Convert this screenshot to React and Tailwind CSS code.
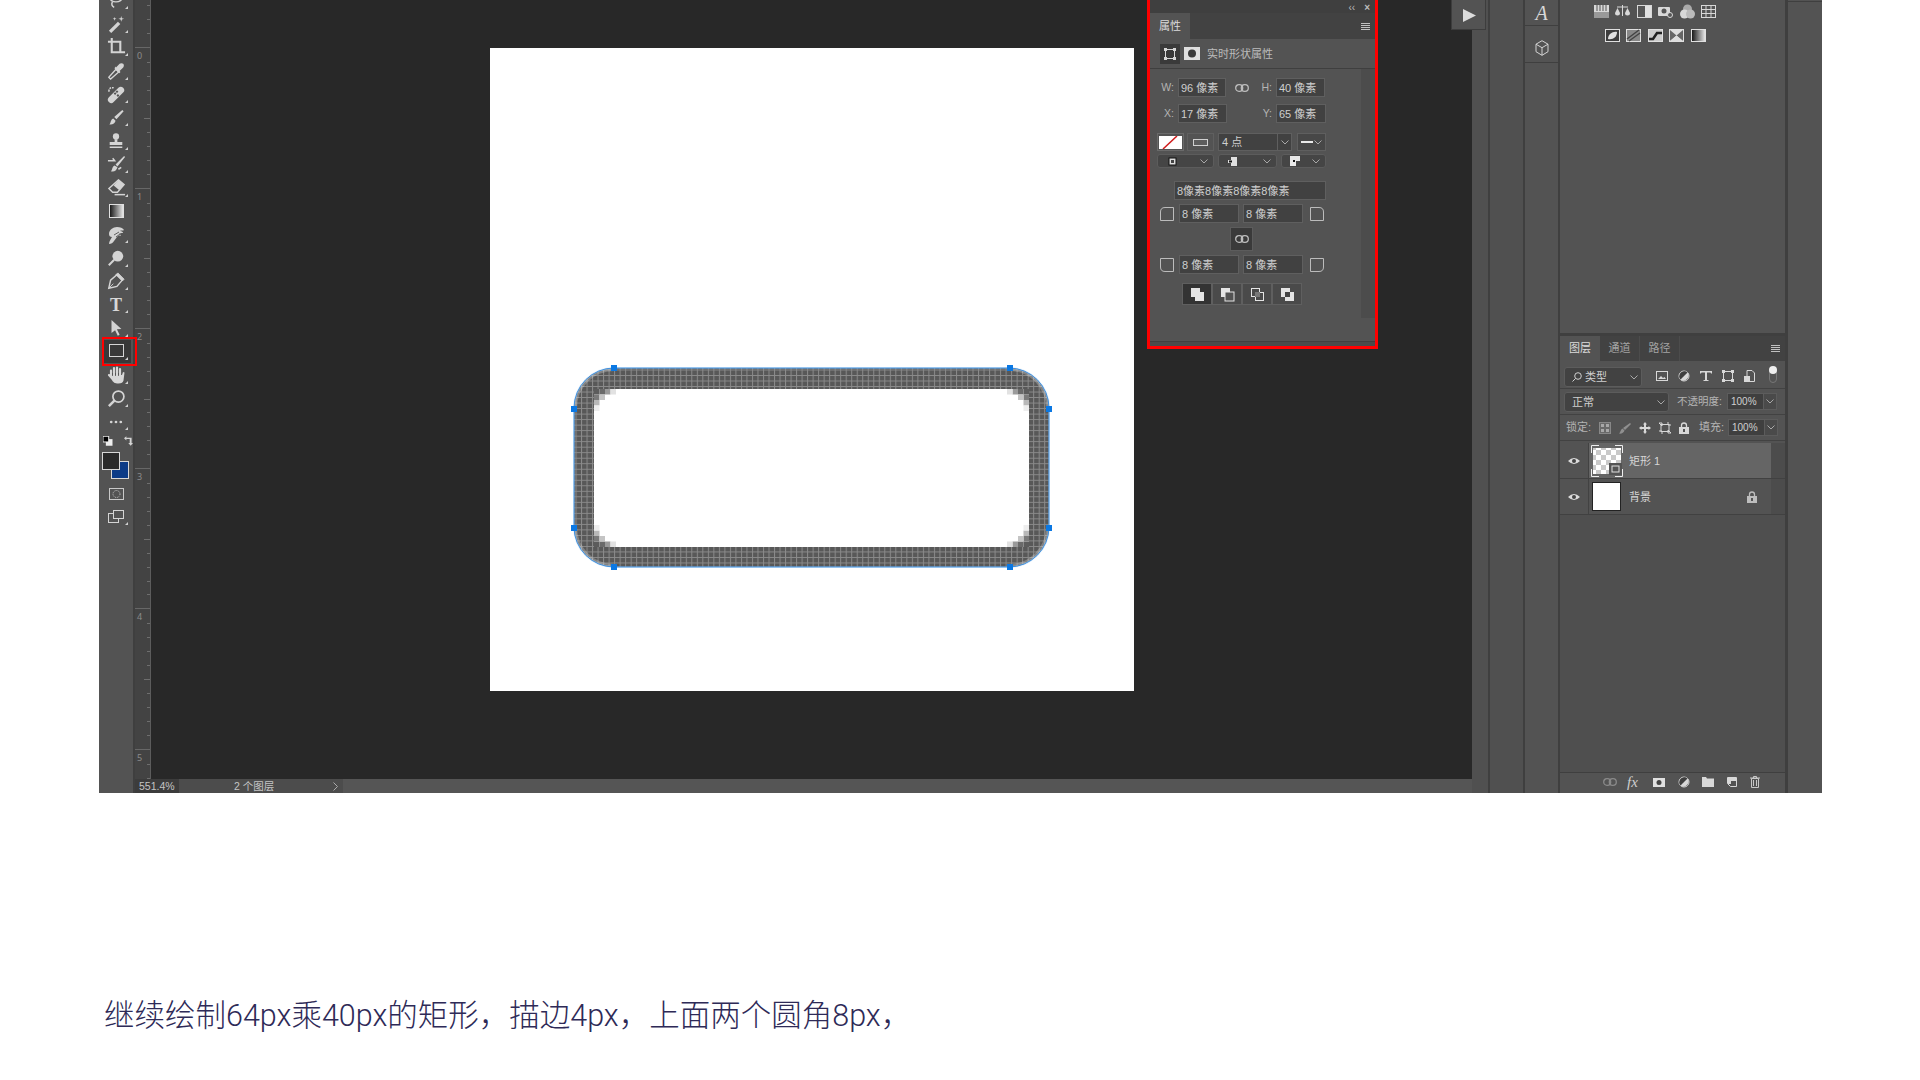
const cjk = { fontFamily: '"Liberation Sans", "Noto Sans CJK SC", sans-serif' };

function Ico({ s = 18, children, fill = "#d4d4d4" }) {
  return (
    <svg width={s} height={s} viewBox="0 0 20 20" fill={fill} className="block shrink-0">
      {children}
    </svg>
  );
}

const line = { fill: "none", stroke: "#d4d4d4", strokeWidth: 1.6 };

const toolIcons = [
  <Ico><ellipse cx="10" cy="6" rx="7" ry="5" {...line} /><path d="M6 11q-2 4 2 6" {...line} /></Ico>,
  <Ico s={19}><path d="M2 16.500l9.500-9.500 2.500 2.500L4.500 19z" /><path d="M15 1l.7 2.300L18 4l-2.300.7L15 7l-.7-2.300L12 4l2.300-.7zM8 2l.5 1.500L10 4l-1.500.5L8 6l-.5-1.500L6 4l1.500-.5z" /></Ico>,
  <Ico s={19}><path d="M1 4h13v12M5 0v15h14" fill="none" stroke="#d4d4d4" strokeWidth="2.200" /></Ico>,
  <Ico><path d="M3 18l-1-1 8-9 3 3-9 8z" fill="none" stroke="#d4d4d4" strokeWidth="1.500" /><path d="M10 6l4-4c1-1 3-1 4 0s1 3 0 4l-4 4 1 1-1.500 1.500-5-5L9 5z" /></Ico>,
  <Ico s={19}><path d="M2 13L12 3a3 3 0 0 1 5 5L7 18a3 3 0 0 1-5-5z" /><path d="M7 9l1.500-1.500L10 9l-1.500 1.500zM10 11l1.500-1.500L13 11l-1.500 1.500zM9 7l1.500-1.500L12 7l-1.500 1.500z" fill="#555" /><path d="M2 7q0-5 5-4" {...line} strokeDasharray="2 1" /></Ico>,
  <Ico><path d="M17 1l1.500 1.500-8 9-2.500-2.500zM7 10.500l2.500 2.500c-.5 3-4 5-7 4 2-1 1-5 4.500-6.500z" /></Ico>,
  <Ico><circle cx="10" cy="5" r="3.500" /><path d="M8.500 8h3v3h5.500v3.500H3V11h5.500zM3 16h14v1.800H3z" /></Ico>,
  <Ico s={19}><path d="M18 1l1 1-8 10-2-2zM8 11l3 2c-1 4-4 5-7 4 2-1 1-5 4-6z" /><path d="M1 6h7l-2-2.500M12 15l3-2" {...line} /></Ico>,
  <Ico s={19}><path d="M12 2l6 5-7 8H6L2 11z" fill="none" stroke="#d4d4d4" strokeWidth="1.500" /><path d="M12 2l6 5-5 6-6-5z" /><path d="M8 17.500h11" {...line} /></Ico>,
  <svg width="15" height="14" viewBox="0 0 15 14" className="block">
    <defs><linearGradient id="toolGrad"><stop offset="0" stopColor="#111" /><stop offset="1" stopColor="#eee" /></linearGradient></defs>
    <rect x="0.500" y="0.500" width="14" height="13" fill="url(#toolGrad)" stroke="#e0e0e0" />
  </svg>,
  <Ico s={20}><path d="M3 19c0-3 2-5 3-7-2 0-3-1-3-3 0-4 4-7 8-7 3 0 6 1 7 3-1 1-3 0-4 1 2 0 3 1 3 2-2 0-3 0-4 1 1 0 2 1 2 2-2-1-3 0-4 1l-3 4c-1 2-3 3-5 3z" /><path d="M8 10l5-3M10 12l4-3" stroke="#535353" strokeWidth="0.900" fill="none" /></Ico>,
  <Ico><circle cx="12" cy="8" r="6" /><path d="M8 12l-6 6" {...line} strokeWidth="2.200" /></Ico>,
  <Ico><path d="M2 18l2-9 7-6 6 6-6 7z" fill="none" stroke="#d4d4d4" strokeWidth="1.600" /><path d="M12 1l7 7-2 2-7-7zM2 18l5-5" fill="#d4d4d4" stroke="#d4d4d4" /></Ico>,
  <span className="text-[18px] leading-none font-bold text-[#d8d8d8]" style={{ fontFamily: '"Liberation Serif", serif' }}>T</span>,
  <Ico><path d="M5 1l11 10-5 .5 3 6-2 1-3-6-4 3z" /></Ico>,
  <svg width="15" height="13" viewBox="0 0 15 13" className="block -mt-[2px]"><rect x="0.500" y="0.500" width="14" height="12" fill="none" stroke="#d4d4d4" /></svg>,
  <Ico s={20}>
    <path d="M5 10.500V5.500M8 10V3M11 10V2.500M14 10.500V4" stroke="#d8d8d8" strokeWidth="2.200" strokeLinecap="round" fill="none" />
    <path d="M4 10h12l1-3 1.500.5-1 8c-.5 2-2 3-5 3-4 0-5-1-7-4L2 10.500c-.5-1 1-2 2-1z" fill="#d8d8d8" />
    <path d="M6.500 8v3M9.500 8v3M12.500 8v3" stroke="#535353" strokeWidth="0.800" />
  </Ico>,
  <Ico s={19}><circle cx="12" cy="8" r="5.800" {...line} strokeWidth="1.800" /><path d="M8 12l-6 6" {...line} strokeWidth="2.600" /></Ico>,
  <Ico s={16}><circle cx="4" cy="10" r="1.700" /><circle cx="10" cy="10" r="1.700" /><circle cx="16" cy="10" r="1.700" /></Ico>,
];

function Tool({ children, corner = true, active }) {
  return (
    <div className="relative h-[23.4px] flex items-center justify-center">
      {active && <div className="absolute left-[3px] top-0 w-[35px] h-[29px] -mt-[3px] border-2 border-[#f00] z-10" />}
      {active && <div className="absolute left-[5px] top-0 w-[27px] h-[23px] bg-[#383838]" />}
      <div className="relative">{children}</div>
      {corner && <span className="absolute right-[5px] bottom-[3px] w-0 h-0 border-l-[3px] border-l-transparent border-b-[3px] border-b-[#d0d0d0]" />}
    </div>
  );
}

function Toolbar() {
  return (
    <div className="w-[36px] shrink-0 bg-[#535353] border-r-2 border-[#3f3f3f] flex flex-col">
      <div className="-mt-[11px] flex flex-col">
        {toolIcons.map((icon, i) => (
          <Tool key={i} active={i === 15} corner={i !== 9}>{icon}</Tool>
        ))}
      </div>
      <div className="relative h-[12px] mt-[3px] flex gap-[11px] pl-[4px]">
        <svg width="10" height="10" viewBox="0 0 10 10"><rect x="3" y="3" width="7" height="7" fill="#eee" /><rect width="6" height="6" fill="#000" stroke="#eee" /></svg>
        <svg width="10" height="10" viewBox="0 0 10 10"><path d="M0 2l2.500-2v1.500H8V7h1.500L7 10 4.500 7H6V3H2.500v1.500z" fill="#d4d4d4" /></svg>
      </div>
      <div className="relative h-[28px] w-[27px] ml-[3px] mt-[4px]">
        <div className="absolute left-[9px] top-[9px] w-[18px] h-[18px] bg-[#0c3b87] border border-[#d8d8d8]" />
        <div className="absolute left-0 top-0 w-[18px] h-[18px] bg-[#2a2a2a] border border-[#d8d8d8]" />
      </div>
      <div className="h-[23px] mt-[2px] flex items-center justify-center">
        <svg width="15" height="12" viewBox="0 0 15 12"><rect x="0.500" y="0.500" width="14" height="11" fill="none" stroke="#c8c8c8" /><circle cx="7.500" cy="6" r="3.500" fill="none" stroke="#c8c8c8" strokeDasharray="1 1" /></svg>
      </div>
      <div className="relative h-[23px] flex items-center justify-center">
        <svg width="16" height="13" viewBox="0 0 16 13"><rect x="0.500" y="3.500" width="10" height="9" fill="#535353" stroke="#d4d4d4" /><rect x="5.500" y="0.500" width="10" height="8" fill="#535353" stroke="#d4d4d4" /></svg>
        <span className="absolute right-[5px] bottom-[3px] w-0 h-0 border-l-[3px] border-l-transparent border-b-[3px] border-b-[#d0d0d0]" />
      </div>
    </div>
  );
}

function Ruler() {
  const blocks = ["", "0", "1", "2", "3", "4", "5"];
  return (
    <div className="w-[16px] shrink-0 bg-[#434343] border-r border-[#5c5c5c] overflow-hidden">
      <div className="-mt-[93px]">
        {blocks.map((n) => (
          <div key={n} className="flex h-[140.3px] border-t border-[#676767]">
            <span className="pl-[2px] pt-[3px] text-[9px] leading-[10px] text-[#8c8c8c]">{n}</span>
            <div className="ml-auto flex flex-col items-end">
              {[0, 1, 2, 3, 4, 5, 6, 7, 8, 9].map((i) => (
                <div key={i} className="h-[14.03px]">
                  {i > 0 && <div className={`border-t border-[#6e6e6e] ${i === 5 ? "w-[6px]" : "w-[3px]"}`} />}
                </div>
              ))}
            </div>
          </div>
        ))}
      </div>
    </div>
  );
}

function Shape() {
  const handles = [[44, 4], [440, 4], [4, 45], [4, 164], [479, 45], [479, 164], [44, 203], [440, 203]];
  const corners = ["translate(24 25)", "translate(459 25) scale(-1 1)", "translate(24 183) scale(1 -1)", "translate(459 183) scale(-1 -1)"];
  const pixels = [[0, 0, "#5c5c5c"], [5.5, 0, "#6a6a6a"], [11, 0, "#9a9a9a"], [16.5, 0, "#e2e2e2"], [0, 5.5, "#7a7a7a"], [5.5, 5.5, "#c4c4c4"], [0, 11, "#b8b8b8"], [0, 16.5, "#ededed"]];
  const outer = ["M5.500 44a38.500 38.500 0 0 1 38.500-38.500", "M477.500 44a38.500 38.500 0 0 0-38.500-38.500", "M5.500 163a38.500 38.500 0 0 0 38.500 38.500", "M477.500 163a38.500 38.500 0 0 1-38.500 38.500"];
  return (
    <svg width="490" height="210" viewBox="0 0 490 210" className="block">
      <defs>
        <pattern id="pixelGrid" width="5.514" height="5.514" patternUnits="userSpaceOnUse">
          <rect width="5.514" height="5.514" fill="#585858" />
          <path d="M0 .5h5.514M.5 0v5.514" stroke="#8b8b8b" strokeWidth="1" />
        </pattern>
      </defs>
      <path fillRule="evenodd" fill="url(#pixelGrid)" d="M44 4H439a40 40 0 0 1 40 40V163a40 40 0 0 1-40 40H44a40 40 0 0 1-40-40V44a40 40 0 0 1 40-40zM24 25V183H459V25z" />
      {corners.map((t) => (
        <g key={t} transform={t}>
          {pixels.map(([x, y, c]) => <rect key={`${x}-${y}`} x={x} y={y} width="5.500" height="5.500" fill={c} />)}
        </g>
      ))}
      {outer.map((d) => <path key={d} d={d} fill="none" stroke="#fff" strokeOpacity="0.250" strokeWidth="3" />)}
      <rect x="4" y="4" width="475" height="199" rx="40" fill="none" stroke="#bcdcf8" strokeWidth="2" opacity="0.400" />
      <rect x="4" y="4" width="475" height="199" rx="40" fill="none" stroke="#2a86e0" strokeWidth="1" opacity="0.850" />
      {handles.map(([x, y]) => <rect key={`${x}-${y}`} x={x - 3} y={y - 3} width="6" height="6" fill="#0b78e3" />)}
    </svg>
  );
}

function Chevron({ c = "#a8a8a8" }) {
  return (
    <svg width="8" height="5" viewBox="0 0 8 5" className="block shrink-0"><path d="M.5 .5L4 4 7.500 .5" fill="none" stroke={c} /></svg>
  );
}

function Menu() {
  return (
    <div className="flex flex-col gap-[1px] w-[9px]">
      <div className="h-[1px] bg-[#c0c0c0]" /><div className="h-[1px] bg-[#c0c0c0]" /><div className="h-[1px] bg-[#c0c0c0]" /><div className="h-[1px] bg-[#c0c0c0]" />
    </div>
  );
}

function Link({ c = "#bdbdbd" }) {
  return (
    <svg width="14" height="8" viewBox="0 0 14 8" className="block"><rect x="0.700" y="0.700" width="7" height="6.600" rx="3.300" fill="none" stroke={c} strokeWidth="1.300" /><rect x="6.300" y="0.700" width="7" height="6.600" rx="3.300" fill="none" stroke={c} strokeWidth="1.300" /></svg>
  );
}

function HalfCircle() {
  return (
    <svg width="12" height="12" viewBox="0 0 12 12" className="block">
      <circle cx="6" cy="6" r="5" fill="#3f3f3f" stroke="#d8d8d8" />
      <path d="M2.500 9.500A5 5 0 0 1 9.500 2.500z" fill="#3f3f3f" />
      <path d="M2.500 9.500A5 5 0 0 0 9.500 2.500z" fill="#d8d8d8" />
    </svg>
  );
}

function Field({ className = "", children }) {
  return (
    <div className={`h-[19px] bg-[#414141] border border-[#5f5f5f] pl-[2px] pt-[1px] flex items-center text-[11px] text-[#cfcfcf] whitespace-nowrap overflow-hidden ${className}`}>
      {children}
    </div>
  );
}

function Label({ className = "", children }) {
  return <span className={`text-[10.500px] text-[#b4b4b4] text-right ${className}`}>{children}</span>;
}

function CornerIcon({ r }) {
  const d = {
    tl: "M.5 13.500V5Q.5 .5 5 .5h8.500v13z",
    tr: "M.5 13.500V.5H9Q13.500 .5 13.500 5v8.500z",
    bl: "M.5 .5h13v13H5Q.5 13.500 .5 9z",
    br: "M.5 .5h13V9q0 4.500-4.500 4.500H.5z",
  }[r];
  return <svg width="14" height="14" viewBox="0 0 14 14" className="block shrink-0"><path d={d} fill="none" stroke="#bcbcbc" /></svg>;
}

function CornerRow({ left, right }) {
  return (
    <div className="flex items-center pl-[10px]">
      <CornerIcon r={left} />
      <Field className="w-[60px] ml-[5px]">8 像素</Field>
      <Field className="w-[60px] ml-[4px]">8 像素</Field>
      <div className="ml-[7px]"><CornerIcon r={right} /></div>
    </div>
  );
}

function Dropdown({ className = "", children }) {
  return (
    <div className={`h-[14px] bg-[#454545] border border-[#5c5c5c] rounded-[3px] flex items-center justify-between pr-[5px] ${className}`}>
      {children}
      <Chevron />
    </div>
  );
}

function PropertiesPanel() {
  const combine = [
    <><rect x="1" y="1" width="9" height="9" fill="#e4e4e4" /><rect x="5" y="5" width="9" height="9" fill="#e4e4e4" /></>,
    <><rect x="1" y="1" width="9" height="9" fill="#e4e4e4" /><rect x="5" y="5" width="9" height="9" fill="#535353" stroke="#e4e4e4" /></>,
    <><rect x="1.500" y="1.500" width="8" height="8" fill="none" stroke="#e4e4e4" /><rect x="5.500" y="5.500" width="8" height="8" fill="none" stroke="#e4e4e4" /><rect x="5" y="5" width="5" height="5" fill="#777" /></>,
    <><rect x="1" y="1" width="9" height="9" fill="#e4e4e4" /><rect x="5" y="5" width="9" height="9" fill="#e4e4e4" /><rect x="5" y="5" width="5" height="5" fill="#444" /></>,
  ];
  return (
    <div className="absolute left-[996px] top-0 w-[231px] h-[349px] border-[3px] border-[#f00] bg-[#535353] flex flex-col" style={cjk}>
      <div className="h-[10px] -mt-[3px] pt-[3px] box-content bg-[#3f3f3f] flex items-center justify-end gap-[9px] pr-[5px] text-[10px] leading-none text-[#bdbdbd]">
        <span>‹‹</span><span className="font-bold">×</span>
      </div>
      <div className="h-[26px] bg-[#424242] flex items-center justify-between pr-[5px]">
        <div className="w-[40px] h-full bg-[#535353] flex items-center justify-center text-[11px] text-[#dcdcdc]">属性</div>
        <Menu />
      </div>
      <div className="h-[30px] border-b border-[#3f3f3f] flex items-center pl-[10px]">
        <div className="w-[20px] h-[20px] bg-[#3a3a3a] flex items-center justify-center">
          <svg width="12" height="12" viewBox="0 0 12 12"><rect x="1.500" y="1.500" width="9" height="9" fill="none" stroke="#d8d8d8" /><path d="M0 0h3v3H0zM9 0h3v3H9zM0 9h3v3H0zM9 9h3v3H9z" fill="#d8d8d8" /></svg>
        </div>
        <svg width="16" height="13" viewBox="0 0 16 13" className="ml-[4px]"><rect width="16" height="13" fill="#e0e0e0" /><circle cx="8" cy="6.500" r="4" fill="#3a3a3a" /></svg>
        <span className="ml-[7px] pt-[2px] text-[11px] text-[#bcbcbc]">实时形状属性</span>
      </div>
      <div className="flex">
        <div className="w-[211px] pt-[9px] flex flex-col">
          <div className="flex items-center pl-[7px]">
            <Label className="w-[17px] pt-[1px]">W:</Label>
            <Field className="w-[48px] ml-[4px]">96 像素</Field>
            <div className="w-[31px] flex justify-center"><Link /></div>
            <Label className="w-[15px] pt-[1px]">H:</Label>
            <Field className="w-[49px] ml-[4px]">40 像素</Field>
          </div>
          <div className="flex items-center pl-[7px] mt-[7px]">
            <Label className="w-[17px] pt-[1px]">X:</Label>
            <Field className="w-[49px] ml-[4px]">17 像素</Field>
            <div className="w-[30px]" />
            <Label className="w-[15px] pt-[1px]">Y:</Label>
            <Field className="w-[50px] ml-[4px]">65 像素</Field>
          </div>
          <div className="flex items-center pl-[7px] mt-[10px]">
            <div className="w-[27px] h-[18px] border border-[#6a6a6a] flex items-center justify-center">
              <svg width="23" height="13" viewBox="0 0 23 13"><rect width="23" height="13" fill="#fff" /><path d="M4 13L18 0" stroke="#d01c1c" strokeWidth="1.500" /></svg>
            </div>
            <div className="w-[27px] h-[18px] ml-[3px] border border-[#5f5f5f] flex items-center justify-center">
              <div className="w-[15px] h-[7px] border border-[#d0d0d0] bg-[#5d5d5d]" />
            </div>
            <div className="w-[74px] h-[18px] ml-[4px] bg-[#414141] border border-[#5f5f5f] flex items-center text-[11px] text-[#cfcfcf]">
              <span className="pl-[3px] pt-[1px] w-[59px]">4 点</span>
              <div className="h-full w-[14px] border-l border-[#5f5f5f] flex items-center justify-center"><Chevron /></div>
            </div>
            <div className="w-[29px] h-[18px] ml-[5px] bg-[#474747] border border-[#5f5f5f] flex items-center justify-between px-[3px]">
              <div className="w-[12px] h-[2px] bg-[#e8e8e8]" />
              <Chevron />
            </div>
          </div>
          <div className="flex items-center pl-[7px] mt-[3px]">
            <Dropdown className="w-[57px] pl-[9px]">
              <svg width="11" height="11" viewBox="0 0 11 11"><rect x="2" y="2" width="7" height="7" fill="#ddd" stroke="#111" /><rect x="4" y="4" width="3" height="3" fill="#444" /></svg>
            </Dropdown>
            <Dropdown className="w-[59px] ml-[4px] pl-[9px]">
              <svg width="9" height="9" viewBox="0 0 9 9"><path d="M3 0h6v9H3V6H0V3h3z" fill="#e0e0e0" /><rect x="1" y="3.500" width="3" height="2" fill="#111" /></svg>
            </Dropdown>
            <Dropdown className="w-[45px] ml-[4px] pl-[8px]">
              <svg width="10" height="10" viewBox="0 0 10 10"><path d="M0 0h10v5H6v5H0z" fill="#e8e8e8" /><rect x="3" y="4" width="2" height="2" fill="#111" /></svg>
            </Dropdown>
          </div>
          <div className="pl-[24px] mt-[13px]">
            <Field className="w-[152px]">8像素8像素8像素8像素</Field>
          </div>
          <div className="mt-[4px]"><CornerRow left="tl" right="tr" /></div>
          <div className="mt-[4px] h-[24px] pl-[80px]">
            <div className="w-[23px] h-[24px] bg-[#3a3a3a] border border-[#5c5c5c] flex items-center justify-center"><Link /></div>
          </div>
          <div className="mt-[4px]"><CornerRow left="bl" right="br" /></div>
          <div className="mt-[9px] pl-[32px] flex">
            {combine.map((c, i) => (
              <div key={i} className={`w-[30px] h-[22px] border border-[#5f5f5f] flex items-center justify-center ${i === 0 ? "bg-[#333]" : "bg-[#4a4a4a]"}`}>
                <svg width="15" height="15" viewBox="0 0 15 15">{c}</svg>
              </div>
            ))}
          </div>
        </div>
        <div className="w-[14px] h-[249px] bg-[#4c4c4c]" />
      </div>
      <div className="mt-auto h-[5px] border-t border-[#3f3f3f] bg-[#4a4a4a]" />
    </div>
  );
}

function Canvas() {
  return (
    <div className="relative flex-1 bg-[#282828] pl-[339px] pt-[48px]">
      <div className="w-[644px] h-[643px] bg-white pl-[80px] pt-[316px]">
        <Shape />
      </div>
      <PropertiesPanel />
      <div className="absolute right-[-14px] top-0 w-[35px] h-[30px] bg-[#535353] border border-t-0 border-[#3d3d3d] flex items-center justify-center pl-[2px] pt-[2px]">
        <svg width="13" height="13" viewBox="0 0 13 13"><path d="M0 0l13 6.500L0 13z" fill="#dcdcdc" /></svg>
      </div>
    </div>
  );
}

function StatusBar() {
  return (
    <div className="h-[14px] shrink-0 flex bg-[#4f4f4f] text-[10.500px] leading-[14px] text-[#c4c4c4]" style={cjk}>
      <div className="w-[44px] bg-[#3c3c3c] pl-[4px]">551.4%</div>
      <div className="w-[164px] bg-[#4c4c4c] flex items-center pr-[3px]">
        <span className="ml-[55px]">2 个图层</span>
        <svg width="5" height="9" viewBox="0 0 5 9" className="ml-auto mr-[2px]"><path d="M.5 .5L4.500 4.500 .5 8.500" fill="none" stroke="#aaa" /></svg>
      </div>
      <div className="flex-1 bg-[#555]" />
    </div>
  );
}

const adjustRow1 = [
  <><rect width="15" height="13" y="1" fill="#d8d8d8" /><path d="M3 1v6M6 1v6M9 1v6M12 1v6" stroke="#555" /><rect y="8" width="15" height="6" fill="#999" /></>,
  <><path d="M7.500 1v11M2 3h11" stroke="#d8d8d8" /><path d="M0 9l2.500-5L5 9a2.500 2.500 0 0 1-5 0zM10 9l2.500-5L15 9a2.500 2.500 0 0 1-5 0z" fill="#d8d8d8" /></>,
  <><rect x="0.500" y="1.500" width="14" height="12" fill="none" stroke="#d8d8d8" /><rect x="1" y="2" width="7" height="11" fill="#555" /><rect x="8" y="2" width="6" height="11" fill="#e0e0e0" /></>,
  <><rect y="3" width="12" height="9" rx="1" fill="#d8d8d8" /><circle cx="6" cy="7" r="2.500" fill="#555" /><circle cx="12" cy="11" r="2.500" fill="#555" stroke="#d8d8d8" /></>,
  <><circle cx="7.500" cy="5" r="4.500" fill="#aaa" /><circle cx="4.500" cy="10" r="4.500" fill="#d8d8d8" /><circle cx="10.500" cy="10" r="4.500" fill="#bbb" /></>,
  <><rect x="0.500" y="1.500" width="14" height="12" fill="none" stroke="#d8d8d8" /><path d="M5 2v11M10 2v11M1 5.500h13M1 9.500h13" stroke="#d8d8d8" /></>,
];

const adjustRow2 = [
  <><rect width="15" height="13" y="1" fill="#e0e0e0" /><rect x="1" y="2" width="13" height="11" fill="#3d3d3d" /><path d="M3 11c0-5 5-8 9-7 0 5-4 8-9 7z" fill="#e0e0e0" /></>,
  <><rect width="15" height="13" y="1" fill="#e0e0e0" /><rect x="1" y="2" width="13" height="11" fill="#888" /><path d="M1 11l12-9M3 13l11-8" stroke="#444" strokeWidth="1.500" /></>,
  <><rect width="15" height="13" y="1" fill="#e0e0e0" /><rect x="1" y="2" width="13" height="11" fill="#ccc" /><path d="M1 11h4l4-6h5" stroke="#222" strokeWidth="2.500" fill="none" /></>,
  <><rect width="15" height="13" y="1" fill="#e0e0e0" /><path d="M1 2h13L7.500 7.500z" fill="#ddd" /><path d="M1 2l6.500 5.500L1 13zM14 2L7.500 7.500 14 13z" fill="#666" /><path d="M1 13l6.500-5.500L14 13z" fill="#ddd" /></>,
  <><defs><linearGradient id="adjGrad"><stop offset="0" stopColor="#111" /><stop offset="1" stopColor="#eee" /></linearGradient></defs><rect x="0.500" y="1.500" width="14" height="12" fill="url(#adjGrad)" stroke="#e0e0e0" /></>,
];

function AdjustIcons() {
  return (
    <div className="h-[333px] flex flex-col items-center pt-[4px] pr-[35px]">
      <div className="flex gap-[6.500px]">
        {adjustRow1.map((c, i) => <svg key={i} width="15" height="15" viewBox="0 0 15 15">{c}</svg>)}
      </div>
      <div className="flex gap-[6.500px] mt-[9px]">
        {adjustRow2.map((c, i) => <svg key={i} width="15" height="15" viewBox="0 0 15 15">{c}</svg>)}
      </div>
    </div>
  );
}

function Eye() {
  return (
    <svg width="12" height="8" viewBox="0 0 12 8" className="block"><path d="M0 4Q6-2 12 4 6 10 0 4z" fill="#dcdcdc" /><circle cx="6" cy="4" r="2" fill="#444" /></svg>
  );
}

function Lock({ c = "#d8d8d8" }) {
  return (
    <svg width="10" height="12" viewBox="0 0 10 12" className="block"><path d="M2.500 5V3.500a2.500 2.500 0 0 1 5 0V5" fill="none" stroke={c} strokeWidth="1.300" /><rect y="5" width="10" height="7" fill={c} /><rect x="4" y="7" width="2" height="3" fill="#535353" /></svg>
  );
}

function LayerRow({ selected, thumb, name, locked }) {
  return (
    <div className="flex h-[36px] border-b border-[#414141]">
      <div className="w-[28px] flex items-center justify-center"><Eye /></div>
      <div className={`w-[183px] border-l border-[#424242] flex items-center pl-[2px] ${selected ? "bg-[#656565]" : "bg-[#535353]"}`}>
        {thumb}
        <span className="ml-[6px] pt-[2px] text-[11px] text-[#d6d6d6]">{name}</span>
        {locked && <div className="ml-auto mr-[14px]"><Lock c="#bdbdbd" /></div>}
      </div>
      <div className="flex-1 bg-[#4c4c4c]" />
    </div>
  );
}

function ShapeThumb() {
  return (
    <svg width="32" height="32" viewBox="0 0 32 32" className="block shrink-0">
      <defs>
        <pattern id="checker" width="10" height="10" patternUnits="userSpaceOnUse">
          <rect width="10" height="10" fill="#fff" /><rect width="5" height="5" fill="#c9c9c9" /><rect x="5" y="5" width="5" height="5" fill="#c9c9c9" />
        </pattern>
      </defs>
      <rect x="2" y="3" width="28" height="26" fill="url(#checker)" />
      <path d="M.5 8V.5H8M24 .5h7.500V8M.5 24v7.500H8M24 31.500h7.500V24" fill="none" stroke="#eee" />
      <rect x="18" y="18" width="13" height="12" fill="#535353" />
      <rect x="21" y="21" width="7" height="6" fill="none" stroke="#e0e0e0" />
    </svg>
  );
}

function LayersPanel() {
  const filters = [
    <><rect x="0.500" y="1.500" width="11" height="9" fill="none" stroke="#d8d8d8" /><path d="M2 9l3-3 2 2 1.500-1L10 9z" fill="#d8d8d8" /></>,
    null,
    <><path d="M0 1h12v2.500h-1L10.500 2.500H7v7.500h1.500v1h-5v-1H5V2.500H1.500L1 3.500H0z" fill="#d8d8d8" /></>,
    <><rect x="1.500" y="1.500" width="9" height="9" fill="none" stroke="#d8d8d8" /><path d="M0 0h3v3H0zM9 0h3v3H9zM0 9h3v3H0zM9 9h3v3H9z" fill="#d8d8d8" /></>,
    <><path d="M3 .5h5l2.500 2.500v8.500h-7.500z" fill="none" stroke="#d8d8d8" /><rect x="0" y="6" width="6" height="6" fill="#d8d8d8" /></>,
  ];
  const locks = [
    <><rect x="0.500" y="0.500" width="11" height="11" fill="#6a6a6a" stroke="#888" /><path d="M2 2h3v3H2zM7 2h3v3H7zM2 7h3v3H2zM7 7h3v3H7z" fill="#a8a8a8" /></>,
    <path d="M11 1l1 1-6 6-2-2zM3.500 6.500l2 2C5 11 2 12 0 11.500c1.500-1 1.500-4 3.500-5z" fill="#8f8f8f" />,
    <path d="M6 0l2 2.500H7V5h2.500V4L12 6 9.500 8V7H7v2.500h1L6 12 4 9.500h1V7H2.500v1L0 6l2.500-2v1H5V2.500H4z" fill="#d8d8d8" />,
    <><rect x="2" y="2.500" width="8" height="7" fill="none" stroke="#d8d8d8" /><path d="M0 1l3 0 0 3zM12 11H9V8zM9 0v3h3M0 9h3v3" fill="none" stroke="#d8d8d8" /></>,
  ];
  return (
    <div className="flex-1 flex flex-col" style={cjk}>
      <div className="h-[25px] bg-[#424242] flex items-center pr-[5px] text-[11px] text-[#a4a4a4]">
        <div className="w-[40px] h-full bg-[#535353] flex items-center justify-center text-[#dcdcdc]">图层</div>
        <div className="w-[40px] h-full border-r border-[#4c4c4c] flex items-center justify-center">通道</div>
        <div className="w-[40px] h-full border-r border-[#4c4c4c] flex items-center justify-center">路径</div>
        <div className="ml-auto"><Menu /></div>
      </div>
      <div className="h-[28px] border-b border-[#424242] bg-[#535353] flex items-center pl-[4px] pt-[4px]">
        <div className="w-[78px] h-[20px] bg-[#424242] border border-[#5c5c5c] rounded-[3px] flex items-center pl-[7px] pr-[3px] pt-[1px] text-[11px] text-[#d0d0d0]">
          <svg width="10" height="10" viewBox="0 0 10 10"><circle cx="6" cy="4" r="3.300" fill="none" stroke="#d0d0d0" /><path d="M3.500 6.500L.5 9.500" stroke="#d0d0d0" /></svg>
          <span className="ml-[3px]">类型</span>
          <div className="ml-auto"><Chevron /></div>
        </div>
        <div className="flex gap-[10px] ml-[14px] -mt-[2px]">
          {filters.map((c, i) => c
            ? <svg key={i} width="12" height="12" viewBox="0 0 12 12" className="block">{c}</svg>
            : <HalfCircle key={i} />)}
        </div>
        <div className="relative ml-[13px] w-[8px] h-[16px] border border-[#777] rounded-full -mt-[4px]">
          <div className="absolute -left-[1px] -top-[2px] w-[8px] h-[8px] rounded-full bg-[#eee]" />
        </div>
      </div>
      <div className="h-[26px] border-b border-[#424242] flex items-center pl-[4px] text-[11px]">
        <div className="w-[105px] h-[20px] bg-[#424242] border border-[#5c5c5c] rounded-[3px] flex items-center justify-between pl-[7px] pr-[3px] pt-[1px] text-[#d0d0d0]">
          正常<Chevron />
        </div>
        <span className="ml-[8px] w-[47px] text-[#b4b4b4] text-[10.500px] whitespace-nowrap">不透明度:</span>
        <div className="ml-[3px] h-[17px] w-[50px] bg-[#3f3f3f] border border-[#5c5c5c] flex items-center pl-[3px] text-[10px] text-[#d0d0d0]">
          <span className="w-[33px]">100%</span>
          <div className="h-full w-[13px] bg-[#4a4a4a] border-l border-[#5c5c5c] flex items-center justify-center"><Chevron /></div>
        </div>
      </div>
      <div className="h-[26px] border-b border-[#424242] flex items-center pl-[6px] text-[11px] text-[#b4b4b4]">
        <span className="w-[30px]">锁定:</span>
        <div className="flex gap-[8px] items-center ml-[3px]">
          {locks.map((c, i) => <svg key={i} width="12" height="12" viewBox="0 0 12 12" className="block">{c}</svg>)}
          <Lock />
        </div>
        <span className="ml-[10px] w-[26px]">填充:</span>
        <div className="ml-[3px] h-[17px] w-[50px] bg-[#3f3f3f] border border-[#5c5c5c] flex items-center pl-[3px] text-[10px] text-[#d0d0d0]">
          <span className="w-[33px]">100%</span>
          <div className="h-full w-[13px] bg-[#4a4a4a] border-l border-[#5c5c5c] flex items-center justify-center"><Chevron /></div>
        </div>
      </div>
      <div className="pt-[2px]">
        <LayerRow selected thumb={<ShapeThumb />} name="矩形 1" />
        <LayerRow thumb={<div className="w-[29px] h-[29px] ml-[1px] mr-[2px] bg-white border border-[#222] shrink-0" />} name="背景" locked />
      </div>
      <div className="flex-1 bg-[#4f4f4f]" />
      <div className="h-[21px] border-t border-[#3f3f3f] flex items-center pl-[43px] pb-[2px] gap-[12px]">
        <div className="w-[12px]"><Link c="#8a8a8a" /></div>
        <span className="w-[14px] text-[15px] leading-none italic text-[#cfcfcf]" style={{ fontFamily: '"Liberation Serif", serif' }}>fx</span>
        <svg width="12" height="9" viewBox="0 0 12 9"><rect width="12" height="9" fill="#e0e0e0" /><circle cx="6" cy="4.500" r="2.500" fill="#444" /></svg>
        <div className="ml-[1px]"><HalfCircle /></div>
        <svg width="12" height="10" viewBox="0 0 12 10"><path d="M0 0h4l1 1.500h7V10H0z" fill="#d8d8d8" /></svg>
        <svg width="10" height="10" viewBox="0 0 10 10" className="ml-[1px]"><path d="M.5 .5h9v9h-6l-3-3z" fill="#535353" stroke="#d8d8d8" /><path d="M1 1h8v3H4v3H1z" fill="#d8d8d8" /></svg>
        <svg width="10" height="12" viewBox="0 0 10 12" className="ml-[1px]"><path d="M0 2h10M3.500 2V.5h3V2M1.500 2.500h7v9h-7zM3.500 4v6M6.500 4v6" fill="none" stroke="#c8c8c8" /></svg>
      </div>
    </div>
  );
}

export default function App() {
  return (
    <div className="w-[1920px] h-[1080px] bg-white overflow-hidden">
      <div className="ml-[99px] w-[1723px] h-[793px] flex bg-[#535353] overflow-hidden">
        <Toolbar />
        <div className="w-[1337px] shrink-0 flex flex-col">
          <div className="flex-1 flex min-h-0">
            <Ruler />
            <Canvas />
          </div>
          <StatusBar />
        </div>
        <div className="w-[16px] shrink-0 bg-[#505050] border-r-2 border-[#3f3f3f] box-content" />
        <div className="w-[33px] shrink-0 bg-[#505050] border-r-2 border-[#3f3f3f] box-content" />
        <div className="w-[33px] shrink-0 bg-[#535353] border-r-2 border-[#3f3f3f] box-content flex flex-col">
          <div className="h-[26px] border-b border-[#3f3f3f] flex items-center justify-center text-[20px] italic text-[#d8d8d8]" style={{ fontFamily: '"Liberation Serif", serif' }}>A</div>
          <div className="h-[37px] border-b border-[#3f3f3f] flex items-center justify-center pt-[8px]">
            <svg width="14" height="16" viewBox="0 0 14 16"><path d="M7 .7l6 3.500v7.500l-6 3.600-6-3.600V4.200zM1 4.200l6 3.500 6-3.500M7 7.700v7.600" fill="none" stroke="#d4d4d4" /></svg>
          </div>
        </div>
        <div className="w-[225px] shrink-0 flex flex-col bg-[#535353]">
          <AdjustIcons />
          <div className="h-[3px] bg-[#3f3f3f]" />
          <LayersPanel />
        </div>
        <div className="w-[3px] shrink-0 bg-[#3f3f3f]" />
        <div className="flex-1 bg-[#535353]"><div className="h-[1px] mt-[1px] bg-[#3f3f3f]" /></div>
      </div>
      <p className="mt-[202px] pl-[104px] text-[30.500px] leading-[42px] font-light text-[#2e2a57]" style={{ fontFamily: 'Roboto, "Noto Sans CJK SC", sans-serif' }}>
        继续绘制64px乘40px的矩形，描边4px，上面两个圆角8px，
      </p>
    </div>
  );
}
